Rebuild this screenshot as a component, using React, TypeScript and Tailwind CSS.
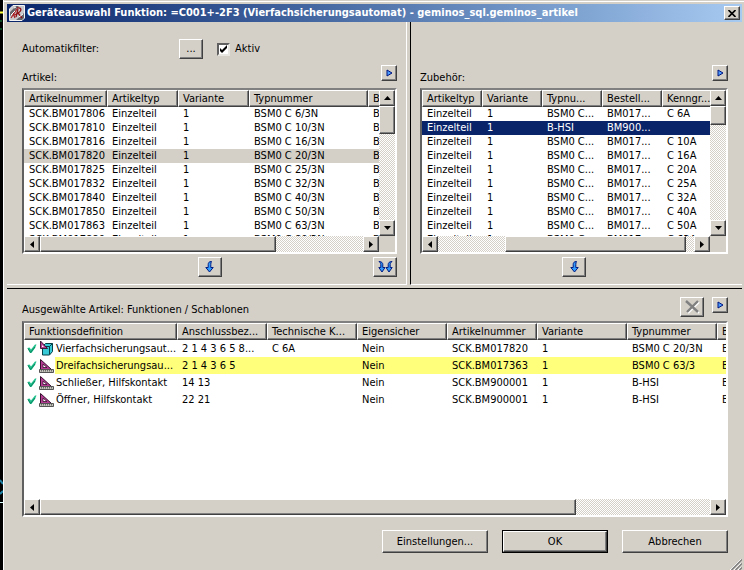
import React from 'react';
import clsx from 'clsx';

const raised =
  'bg-[#d4d0c8] border border-t-white border-l-white border-r-[#404040] border-b-[#404040] shadow-[inset_-1px_-1px_#808080]';
const sunken =
  'border-2 border-t-[#808080] border-l-[#606060] border-r-white border-b-white bg-white';
const checker =
  'bg-[repeating-conic-gradient(#fff_0_25%,#d4d0c8_0_50%)] bg-[length:2px_2px]';

type Column = { label: string; width: string };
type Row = { cells: string[]; state?: 'current' | 'selected' | 'marked'; icon?: 'cube' | 'ruler' };

const articleColumns: Column[] = [
  { label: 'Artikelnummer', width: 'w-[83px]' },
  { label: 'Artikeltyp', width: 'w-[71px]' },
  { label: 'Variante', width: 'w-[71px]' },
  { label: 'Typnummer', width: 'w-[119px]' },
  { label: 'B', width: 'w-[90px]' },
];

const articleRows: Row[] = [
  ['06', '6'], ['10', '10'], ['16', '16'], ['20', '20'], ['25', '25'],
  ['32', '32'], ['40', '40'], ['50', '50'], ['63', '63'], ['80', '80'],
].map(([no, amp]) => ({
  cells: ['SCK.BM0178' + no, 'Einzelteil', '1', `BSM0 C ${amp}/3N`, 'B'],
  state: no === '20' ? 'current' : undefined,
}));

const accessoryColumns: Column[] = [
  { label: 'Artikeltyp', width: 'w-[60px]' },
  { label: 'Variante', width: 'w-[60px]' },
  { label: 'Typnu...', width: 'w-[60px]' },
  { label: 'Bestell...', width: 'w-[60px]' },
  { label: 'Kenngr...', width: 'w-[90px]' },
];

const accessoryRows: Row[] = ['6', '', '10', '16', '20', '25', '32', '40', '50', '63'].map(amp =>
  amp
    ? { cells: ['Einzelteil', '1', 'BSM0 C...', 'BM017...', `C ${amp}A`] }
    : { cells: ['Einzelteil', '1', 'B-HSI', 'BM900...', ''], state: 'selected' },
);

const selectionColumns: Column[] = [
  { label: 'Funktionsdefinition', width: 'w-[153px]' },
  { label: 'Anschlussbez...', width: 'w-[90px]' },
  { label: 'Technische K...', width: 'w-[90px]' },
  { label: 'Eigensicher', width: 'w-[90px]' },
  { label: 'Artikelnummer', width: 'w-[90px]' },
  { label: 'Variante', width: 'w-[90px]' },
  { label: 'Typnummer', width: 'w-[90px]' },
  { label: 'B', width: 'w-[90px]' },
];

const selectionRows: Row[] = [
  { icon: 'cube', cells: ['Vierfachsicherungsaut...', '2 1 4 3 6 5 8...', 'C 6A', 'Nein', 'SCK.BM017820', '1', 'BSM0 C 20/3N', 'B'] },
  { icon: 'ruler', state: 'marked', cells: ['Dreifachsicherungsau...', '2 1 4 3 6 5', '', 'Nein', 'SCK.BM017363', '1', 'BSM0 C 63/3', 'B'] },
  { icon: 'ruler', cells: ['Schließer, Hilfskontakt', '14 13', '', 'Nein', 'SCK.BM900001', '1', 'B-HSI', 'B'] },
  { icon: 'ruler', cells: ['Öffner, Hilfskontakt', '22 21', '', 'Nein', 'SCK.BM900001', '1', 'B-HSI', 'B'] },
];

const AppIcon = () => (
  <svg width="16" height="16" viewBox="0 0 16 16" className="shrink-0" aria-hidden="true">
    <path d="M4 .5H15.500V13L13 15.500H.5V4Z" fill="#c9c9cc" stroke="#f4f4f4" />
    <path d="M1 7L7 1H10L1 11ZM7 15L15 8V13L13 15Z" fill="#66666c" />
    <path d="M2 13L8 4M4 8L6 13M5 10L10 8" stroke="#a81d22" strokeWidth="1.2" fill="none" />
    <path d="M8 3C13 2 13 6 9 8L13 13M9 4L7 12" stroke="#8e1117" strokeWidth="1.3" fill="none" />
    <path d="M2 10L6 6M10 12L14 9M5 3L7 2" stroke="#fff" strokeWidth="1" />
  </svg>
);

const Play = () => (
  <svg width="7" height="8" viewBox="0 0 7 8" aria-hidden="true">
    <path d="M1 1V7L6 4Z" fill="#4a9dff" stroke="#00137f" strokeWidth="1" />
  </svg>
);

const DownArrow = () => (
  <svg width="9" height="12" viewBox="0 0 9 12" aria-hidden="true">
    <path
      d="M6.5 .5C3.8 .5 3.2 2 3.2 3.5V6.5H.8L4.5 11L8.2 6.5H5.8V3.5C5.8 2.2 6 1.5 6.5 .5Z"
      fill="#2f9bff"
      stroke="#001a80"
    />
  </svg>
);

const DoubleArrow = () => (
  <svg width="15" height="12" viewBox="0 0 15 12" aria-hidden="true">
    <g fill="#2f9bff" stroke="#001a80" strokeWidth="1">
      <path d="M1 .5C3.8 .5 4.8 2 4.8 3.5V6.5H7L4 11L.8 6.5H2.8V3.5C2.8 2.2 2 1.5 1 .5Z" />
      <path d="M14 .5C11.2 .5 10.2 2 10.2 3.5V6.5H8L11 11L14.2 6.5H12.2V3.5C12.2 2.2 13 1.5 14 .5Z" />
    </g>
  </svg>
);

const Check = () => (
  <svg width="10" height="14" viewBox="0 0 10 14" aria-hidden="true">
    <path d="M.5 6L2.500 5.500L4 7.500L8 2.500H9.500L8 6L4.500 11H3Z" fill="#1fc08c" />
    <path d="M1 6.500L3.500 10.500L8 5" stroke="#0b8460" strokeWidth="1" fill="none" />
  </svg>
);

const RulerIcon = () => (
  <svg width="16" height="14" viewBox="0 0 16 14" aria-hidden="true">
    <path d="M1.500 .5V10.500H12.500Z" fill="#b53c93" stroke="#35102c" strokeWidth="1" />
    <path d="M4 5V8.500H8Z" fill="#fff" stroke="#35102c" strokeWidth=".8" />
    <path d="M.5 10.500H14.500V13.500H.5Z" fill="#c4c4bc" stroke="#555" strokeWidth="1" />
    <path d="M2.500 11V12.500M4.500 11V12.500M6.500 11V12.500M8.500 11V12.500M10.500 11V12.500M12.500 11V12.500" stroke="#444" strokeWidth=".7" />
  </svg>
);

const CubeIcon = () => (
  <svg width="16" height="15" viewBox="0 0 16 15" aria-hidden="true">
    <path d="M3.500 5.500L6.500 2.500H13.500V10.500L10.500 14H3.500Z" fill="#37c9d6" stroke="#073f46" strokeWidth="1" />
    <path d="M3.500 5.500H10.500V13.500M10.500 5.500L13.500 2.500" stroke="#073f46" fill="none" />
    <path d="M1.500 0V7.500H8.500Z" fill="#b53c93" stroke="#35102c" strokeWidth=".9" />
    <path d="M3 4V6H5Z" fill="#fff" />
  </svg>
);

const arrows = {
  up: 'M0 4L3.500 0L7 4Z',
  down: 'M0 0H7L3.500 4Z',
  left: 'M4 0V7L0 3.500Z',
  right: 'M0 0L4 3.500L0 7Z',
};

const ScrollButton = ({ dir }: { dir: keyof typeof arrows }) => {
  const vertical = dir === 'up' || dir === 'down';
  return (
    <button aria-label={`Scroll ${dir}`} className={clsx(raised, 'flex size-4 shrink-0 items-center justify-center')}>
      <svg width={vertical ? 7 : 4} height={vertical ? 4 : 7} aria-hidden="true">
        <path d={arrows[dir]} fill="#000" />
      </svg>
    </button>
  );
};

const HScroll = ({ thumb }: { thumb: string }) => (
  <div className="flex h-4 min-w-0 flex-1">
    <ScrollButton dir="left" />
    <div className={clsx(checker, 'flex-1')}>
      <div className={clsx(raised, 'h-full', thumb)} />
    </div>
    <ScrollButton dir="right" />
  </div>
);

const VScroll = ({ thumb }: { thumb: string }) => (
  <div className="flex w-4 shrink-0 flex-col">
    <ScrollButton dir="up" />
    <div className={clsx(checker, 'flex-1')}>
      <div className={clsx(raised, thumb)} />
    </div>
    <ScrollButton dir="down" />
  </div>
);

const Grid = ({ columns, rows, label }: { columns: Column[]; rows: Row[]; label: string }) => (
  <table aria-label={label} className="w-max table-fixed border-separate border-spacing-0">
    <thead>
      <tr className="h-[17px]">
        {columns.map(col => (
          <th key={col.label} className={clsx(raised, col.width, 'overflow-hidden p-0 pl-1 text-left font-normal')}>
            {col.label}
          </th>
        ))}
      </tr>
    </thead>
    <tbody>
      {rows.map((row, r) => (
        <tr
          key={r}
          className={clsx(
            row.icon ? 'h-[17px]' : 'h-[14px]',
            row.state === 'current' && 'bg-[#d4d0c8]',
            row.state === 'selected' && 'bg-[#0a246a] text-white',
            row.state === 'marked' && 'bg-[#ffff7b]',
          )}
        >
          {row.cells.map((cell, c) => (
            <td key={c} className={clsx('p-0', !(row.icon && c === 0) && 'pl-[5px]')}>
              {row.icon && c === 0 ? (
                <div className="flex h-[17px] items-center">
                  <span className="flex h-full w-[31px] shrink-0 items-center gap-[2px] bg-white pl-[3px]">
                    <Check />
                    {row.icon === 'cube' ? <CubeIcon /> : <RulerIcon />}
                  </span>
                  <span className="pl-px">{cell}</span>
                </div>
              ) : (
                cell
              )}
            </td>
          ))}
        </tr>
      ))}
    </tbody>
  </table>
);

type ListProps = { columns: Column[]; rows: Row[]; label: string; hThumb: string; vThumb: string };

const ScrollList = ({ columns, rows, label, hThumb, vThumb }: ListProps) => (
  <div className={sunken}>
    <div className="flex h-[146px]">
      <div className="min-w-0 flex-1 overflow-hidden">
        <Grid columns={columns} rows={rows} label={label} />
      </div>
      <VScroll thumb={vThumb} />
    </div>
    <div className="flex bg-[#d4d0c8] pr-4">
      <HScroll thumb={hThumb} />
    </div>
  </div>
);

const IconButton = ({ label, className, children }: { label: string; className: string; children: React.ReactNode }) => (
  <button aria-label={label} className={clsx(raised, 'flex shrink-0 items-center justify-center', className)}>
    {children}
  </button>
);

const App: React.FC = () => {
  return (
    <div className="flex min-h-screen bg-[#d4d0c8] font-['DejaVu_Sans_Condensed','Liberation_Sans',sans-serif] text-[11px] leading-[14px] text-black whitespace-nowrap">
      <aside className="w-[3px] shrink-0 bg-black">
        <svg width="3" height="510" aria-hidden="true">
          <path d="M0 12.500H3" stroke="#ffff3c" strokeWidth="2" />
          <path d="M0 21H2M0 29H2" stroke="#159642" strokeWidth="1" />
          <path d="M0 480L3 484M0 494L3 491" stroke="#2083a5" strokeWidth="2" fill="none" />
          <path d="M0 502.500H3" stroke="#d9ffff" strokeWidth="1" />
        </svg>
      </aside>
      <div className="flex min-w-0 flex-1 flex-col border-l border-white pt-px">
        <div className="flex flex-1 flex-col border-t border-white pt-[2px] pr-[2px] pl-[3px]">
          <header className="flex h-[18px] shrink-0 items-center gap-[2px] bg-linear-to-r from-[#0a246a] to-[#a6caf0] pr-[2px] pl-[2px] text-white">
            <AppIcon />
            <h1 className="min-w-0 flex-1 overflow-hidden text-[11px] font-bold">
              Geräteauswahl Funktion: =C001+-2F3 (Vierfachsicherungsautomat) - geminos_sql.geminos_artikel
            </h1>
            <IconButton label="Schließen" className="h-[14px] w-4">
              <svg width="8" height="7" viewBox="0 0 8 7" aria-hidden="true">
                <path d="M.5 0L7.500 7M7.500 0L.5 7" stroke="#000" strokeWidth="1.600" />
              </svg>
            </IconButton>
          </header>

          <div className="grid grid-cols-[400fr_332fr] gap-[3px]">
            <section className="min-w-0 border-r border-b border-white pt-[17px] pr-[9px] pb-[7px] pl-[15px]">
              <div className="flex h-5 items-center">
                <label htmlFor="filter" className="w-[157px]">Automatikfilter:</label>
                <button id="filter" className={clsx(raised, 'h-5 w-6')}>...</button>
                <label className="ml-[14px] flex items-center gap-[5px]">
                  <span className="grid">
                    <input
                      type="checkbox"
                      defaultChecked
                      className="peer col-start-1 row-start-1 size-[13px] appearance-none border-2 border-t-[#606060] border-l-[#606060] border-r-[#e8e6e0] border-b-[#e8e6e0] bg-white"
                    />
                    <svg
                      width="13"
                      height="13"
                      className="pointer-events-none invisible col-start-1 row-start-1 peer-checked:visible"
                      aria-hidden="true"
                    >
                      <path d="M3 5V8L5 10L10 5V2L5 7Z" fill="#000" />
                    </svg>
                  </span>
                  Aktiv
                </label>
              </div>
              <div className="mt-[6px] mb-[3px] flex items-start justify-between">
                <h2 className="mt-[6px]">Artikel:</h2>
                <IconButton label="Artikelmenü" className="size-4"><Play /></IconButton>
              </div>
              <ScrollList columns={articleColumns} rows={articleRows} label="Artikel" hThumb="w-[73%]" vThumb="h-[28px]" />
              <div className="mt-[3px] grid grid-cols-[1fr_auto_1fr]">
                <IconButton label="Artikel übernehmen" className="col-start-2 h-5 w-6"><DownArrow /></IconButton>
                <IconButton label="Alle übernehmen" className="h-5 w-6 justify-self-end"><DoubleArrow /></IconButton>
              </div>
            </section>

            <section className="flex min-w-0 flex-col justify-end border-b border-l border-b-white border-l-black pr-[14px] pb-[7px] pl-[9px]">
              <div className="mb-[3px] flex items-start justify-between">
                <h2 className="mt-[6px]">Zubehör:</h2>
                <IconButton label="Zubehörmenü" className="size-4"><Play /></IconButton>
              </div>
              <ScrollList columns={accessoryColumns} rows={accessoryRows} label="Zubehör" hThumb="ml-[26%] w-[71%]" vThumb="h-[19px]" />
              <IconButton label="Zubehör übernehmen" className="mt-[3px] h-5 w-6 self-center"><DownArrow /></IconButton>
            </section>
          </div>

          <section className="mt-[3px] flex flex-1 flex-col border-t border-black pt-2 pr-[14px] pl-[15px]">
            <div className="mb-1 flex items-start gap-2">
              <h2 className="mt-[6px] flex-1">Ausgewählte Artikel: Funktionen / Schablonen</h2>
              <IconButton label="Entfernen" className="h-5 w-6">
                <svg width="15" height="14" viewBox="0 0 15 14" aria-hidden="true">
                  <path d="M2 2L14 13M14 2L3 13" stroke="#fff" strokeWidth="2" />
                  <path d="M1 1L13 12M13 1L2 12" stroke="#808080" strokeWidth="2.400" />
                </svg>
              </IconButton>
              <IconButton label="Auswahlmenü" className="size-4"><Play /></IconButton>
            </div>
            <div className={clsx(sunken, 'flex flex-1 flex-col')}>
              <div className="flex-1 overflow-hidden">
                <Grid columns={selectionColumns} rows={selectionRows} label="Ausgewählte Artikel" />
              </div>
              <div className="flex">
                <HScroll thumb="w-[80%]" />
              </div>
            </div>
            <footer className="mt-[13px] mb-[6px] flex justify-end gap-[14px]">
              <button className={clsx(raised, 'h-[23px] w-[106px]')}>Einstellungen...</button>
              <button className="h-[23px] w-[106px] border border-black">
                <span className={clsx(raised, 'flex h-full items-center justify-center')}>OK</span>
              </button>
              <button className={clsx(raised, 'h-[23px] w-[106px]')}>Abbrechen</button>
            </footer>
          </section>
          <svg width="12" height="11" viewBox="0 0 12 11" className="self-end" aria-hidden="true">
            <path d="M0 11L11 0M4 11L11 4M8 11L11 8" stroke="#fff" />
            <path d="M1.500 11L12 .5M5.500 11L12 4.500M9.500 11L12 8.500" stroke="#808080" strokeWidth="1.500" />
          </svg>
        </div>
      </div>
    </div>
  );
};

export default App;
